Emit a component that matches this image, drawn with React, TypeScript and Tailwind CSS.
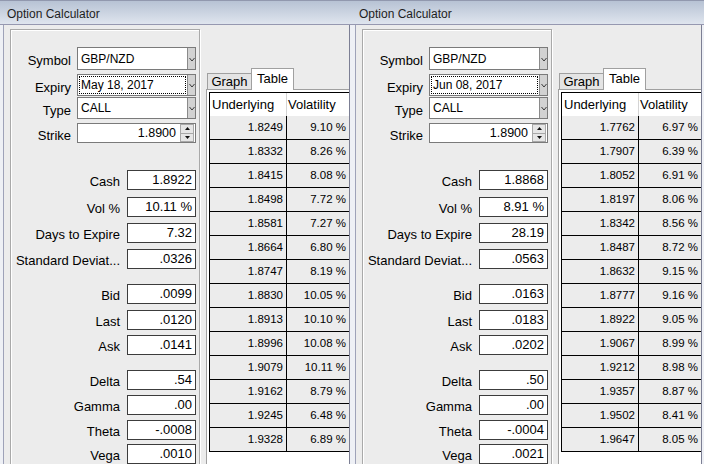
import React from "react";

type WinData = {
  expiry: string;
  fields: { label: string; value: string; mt: string }[];
  rows: [string, string][];
};

const LEFT: WinData = {
  expiry: "May 18, 2017",
  fields: [
    { label: "Cash", value: "1.8922", mt: "mt-[27px]" },
    { label: "Vol %", value: "10.11 %", mt: "mt-[7px]" },
    { label: "Days to Expire", value: "7.32", mt: "mt-[6px]" },
    { label: "Standard Deviat...", value: ".0326", mt: "mt-[6px]" },
    { label: "Bid", value: ".0099", mt: "mt-[15px]" },
    { label: "Last", value: ".0120", mt: "mt-[6px]" },
    { label: "Ask", value: ".0141", mt: "mt-[5px]" },
    { label: "Delta", value: ".54", mt: "mt-[15px]" },
    { label: "Gamma", value: ".00", mt: "mt-[5px]" },
    { label: "Theta", value: "-.0008", mt: "mt-[5px]" },
    { label: "Vega", value: ".0010", mt: "mt-[4px]" },
  ],
  rows: [
    ["1.8249", "9.10 %"],
    ["1.8332", "8.26 %"],
    ["1.8415", "8.08 %"],
    ["1.8498", "7.72 %"],
    ["1.8581", "7.27 %"],
    ["1.8664", "6.80 %"],
    ["1.8747", "8.19 %"],
    ["1.8830", "10.05 %"],
    ["1.8913", "10.10 %"],
    ["1.8996", "10.08 %"],
    ["1.9079", "10.11 %"],
    ["1.9162", "8.79 %"],
    ["1.9245", "6.48 %"],
    ["1.9328", "6.89 %"],
  ],
};

const RIGHT: WinData = {
  expiry: "Jun 08, 2017",
  fields: [
    { label: "Cash", value: "1.8868", mt: "mt-[27px]" },
    { label: "Vol %", value: "8.91 %", mt: "mt-[7px]" },
    { label: "Days to Expire", value: "28.19", mt: "mt-[6px]" },
    { label: "Standard Deviat...", value: ".0563", mt: "mt-[6px]" },
    { label: "Bid", value: ".0163", mt: "mt-[15px]" },
    { label: "Last", value: ".0183", mt: "mt-[6px]" },
    { label: "Ask", value: ".0202", mt: "mt-[5px]" },
    { label: "Delta", value: ".50", mt: "mt-[15px]" },
    { label: "Gamma", value: ".00", mt: "mt-[5px]" },
    { label: "Theta", value: "-.0004", mt: "mt-[5px]" },
    { label: "Vega", value: ".0021", mt: "mt-[4px]" },
  ],
  rows: [
    ["1.7762", "6.97 %"],
    ["1.7907", "6.39 %"],
    ["1.8052", "6.91 %"],
    ["1.8197", "8.06 %"],
    ["1.8342", "8.56 %"],
    ["1.8487", "8.72 %"],
    ["1.8632", "9.15 %"],
    ["1.8777", "9.16 %"],
    ["1.8922", "9.05 %"],
    ["1.9067", "8.99 %"],
    ["1.9212", "8.98 %"],
    ["1.9357", "8.87 %"],
    ["1.9502", "8.41 %"],
    ["1.9647", "8.05 %"],
  ],
};

function Chevron() {
  return (
    <svg width="6" height="5" viewBox="0 0 6 5" className="mt-[1px]">
      <path d="M0.5 1 L3 4 L5.5 1" fill="none" stroke="#3a3a3a" strokeWidth="1" />
    </svg>
  );
}

function Combo({ value, focus, cls }: { value: string; focus?: boolean; cls: string }) {
  return (
    <div className={"flex w-[119px] border border-[#7a7a7a] bg-white text-[12px] " + cls}>
      {focus ? (
        <div className="m-[1px] flex min-w-0 flex-1 items-center border border-dotted border-black pl-[1px]">
          {value}
        </div>
      ) : (
        <div className="flex min-w-0 flex-1 items-center pl-[3px]">{value}</div>
      )}
      <div className="flex w-[8px] shrink-0 items-center justify-center border-l border-[#8a8a8a] bg-[#d2d2d2]">
        <Chevron />
      </div>
    </div>
  );
}

function Spin({ value }: { value: string }) {
  return (
    <div className="flex h-[20px] w-[119px] border border-[#7a7a7a] bg-white text-[12.5px]">
      <div className="flex flex-1 items-center justify-end pr-[4px]">{value}</div>
      <div className="mr-[1px] flex w-[14px] shrink-0 flex-col">
        <div className="flex flex-1 items-center justify-center border border-[#a8a8a8] bg-[#e6e6e6]">
          <svg width="5" height="3" viewBox="0 0 5 3">
            <path d="M0 3 L2.5 0 L5 3 Z" fill="#111" />
          </svg>
        </div>
        <div className="flex flex-1 items-center justify-center border border-t-0 border-[#a8a8a8] bg-[#e6e6e6]">
          <svg width="5" height="3" viewBox="0 0 5 3">
            <path d="M0 0 L2.5 3 L5 0 Z" fill="#111" />
          </svg>
        </div>
      </div>
    </div>
  );
}

function TopRow({ label, children, cls }: { label: string; children: React.ReactNode; cls: string }) {
  return (
    <div className={"flex items-center " + cls}>
      <div className="w-[60px] shrink-0 pt-[5px] text-right">{label}</div>
      <div className="ml-[6px]">{children}</div>
    </div>
  );
}

function Window({ data }: { data: WinData }) {
  return (
    <div className="flex h-[464px] w-[352px] shrink-0 flex-col overflow-hidden font-['Liberation_Sans',Arial,sans-serif] text-[13px] text-black">
      <div className="flex h-[25px] shrink-0 items-center border-t border-b border-t-[#9198ae] border-b-[#9698b0] bg-gradient-to-b from-[#b7c2d4] to-[#dfe5ee] pl-[7px] pt-[3px] text-[12px] text-[#1e1e1e]">
        Option Calculator
      </div>
      <div className="flex min-h-0 flex-1 bg-[#ececec]">
        <div className="w-[3px] shrink-0 bg-[#eef0f5]" />
        <div className="w-[1px] shrink-0 bg-[#9ea2b8]" />
        <div className="ml-[6px] mt-[4px] h-[460px] w-[190px] shrink-0 border border-[#a9a9a9] pt-[17px] shadow-[inset_1px_1px_0_#ffffff,1px_1px_0_#ffffff]">
          <TopRow label="Symbol" cls="h-[23px]">
            <Combo value="GBP/NZD" cls="h-[23px]" />
          </TopRow>
          <TopRow label="Expiry" cls="mt-[4px] h-[22px]">
            <Combo value={data.expiry} focus cls="h-[22px]" />
          </TopRow>
          <TopRow label="Type" cls="mt-[1px] h-[22px]">
            <Combo value="CALL" cls="h-[22px]" />
          </TopRow>
          <TopRow label="Strike" cls="mt-[4px] h-[20px]">
            <Spin value="1.8900" />
          </TopRow>
          {data.fields.map((f) => (
            <div key={f.label} className={"flex h-[20px] items-center " + f.mt}>
              <div className="w-[109px] shrink-0 whitespace-nowrap pt-[3px] text-right">{f.label}</div>
              <div className="ml-[7px] flex h-[20px] w-[69px] shrink-0 items-center justify-end border border-[#3c3c3c] bg-white pr-[3px]">
                {f.value}
              </div>
            </div>
          ))}
        </div>
        <div className="ml-[6px] flex min-w-0 flex-1 flex-col pt-[43px]">
          <div className="flex h-[21px] items-end pl-[1px]">
            <div className="flex h-[16px] w-[44px] items-center justify-center border-t border-l border-[#a0a0a0] bg-[#e4e4e4] pt-[1px]">
              Graph
            </div>
            <div className="relative z-10 -mb-px flex h-[22px] w-[43px] items-center justify-center border-t border-l border-r border-[#a0a0a0] bg-white pb-[2px]">
              Table
            </div>
          </div>
          <div className="flex-1 border-t border-l border-[#a0a0a0] bg-white pt-[2px] pl-[2px]">
            <div className="border-t border-l border-black">
              <div className="flex h-[23px] bg-white">
                <div className="flex w-[77px] items-center border-r border-[#d4d4d4] pl-[2px]">Underlying</div>
                <div className="flex flex-1 items-center pl-[1px]">Volatility</div>
              </div>
              {data.rows.map(([u, v]) => (
                <div key={u} className="flex h-[24px] border-b border-black bg-[#ececec] text-[11.5px]">
                  <div className="flex w-[77px] items-center justify-end border-r border-black pr-[3px]">{u}</div>
                  <div className="flex flex-1 items-center justify-end pr-[3px]">{v}</div>
                </div>
              ))}
            </div>
          </div>
        </div>
        <div className="w-[1px] shrink-0 bg-[#7c7f94]" />
        <div className="w-[2px] shrink-0 bg-[#eef0f5]" />
      </div>
    </div>
  );
}

export default function App() {
  return (
    <div className="flex h-[464px] w-[704px] overflow-hidden bg-white">
      <Window data={LEFT} />
      <Window data={RIGHT} />
    </div>
  );
}
